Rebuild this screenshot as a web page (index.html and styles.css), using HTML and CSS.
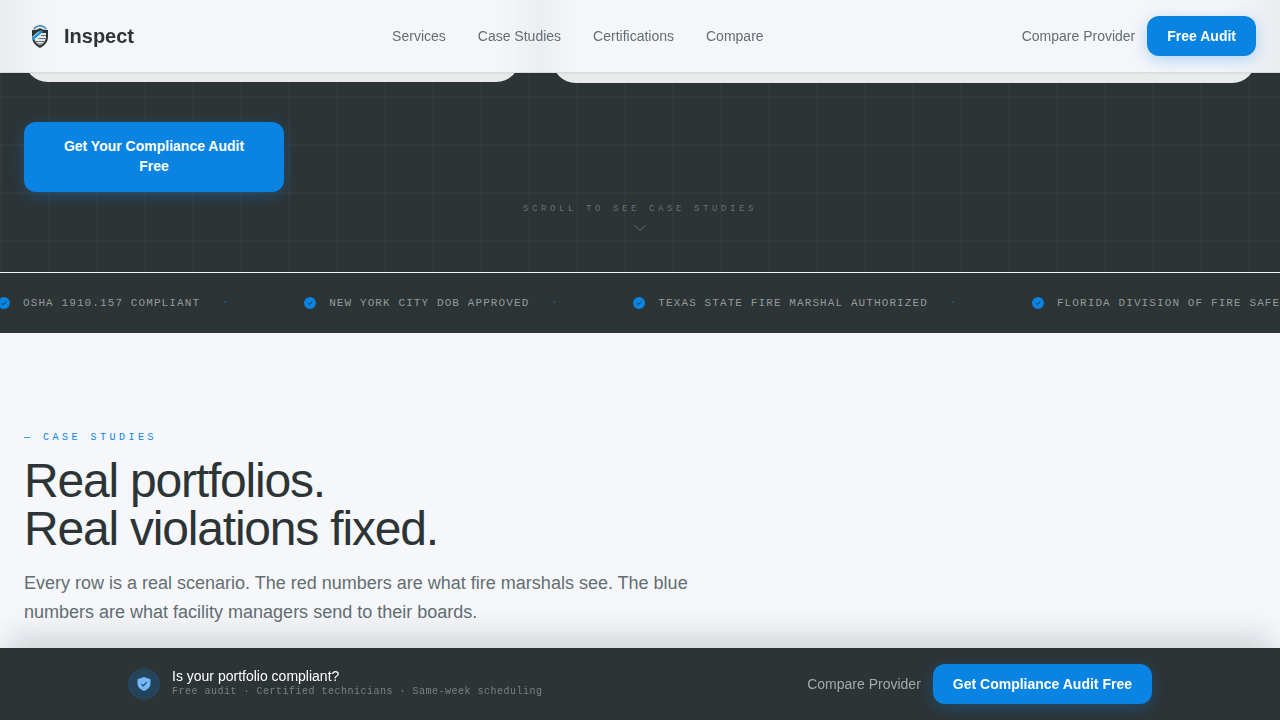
FILE: index.html
```html
<!DOCTYPE html>
<html lang="en">

<head>
    <meta charset="UTF-8">
    <meta name="viewport" content="width=device-width, initial-scale=1.0">
    <title>Inspect</title>
    <link rel="stylesheet" href="styles.css">
</head>

<body>

    <header class="header">
        <a href="#" class="logo">
            <svg class="logo-icon" viewBox="0 0 32 32" aria-hidden="true">
                <path d="M9.500 9Q16 2.500 22.500 9" fill="none" stroke="#6fb4d8" stroke-width="2" />
                <path d="M10.500 8Q16 3.500 21.500 8" fill="none" stroke="#2d5468" stroke-width="1" stroke-dasharray="1.500 1" />
                <path d="M8 10q5 .5 8-2q3 2.500 8 2v7q0 7-8 11q-8-4-8-11z" fill="#2d3436" />
                <path d="M10 18l5-5h7v4q0 5-6 8.500q-5-2.500-6-7.500z" fill="#e4e9ea" />
                <path d="M17 15.500h5M14.500 18.500h7M12 21.500h8M12.500 24h7" stroke="#626b6e" stroke-width="1" />
                <path d="M8.500 19.500v-3l6-5h4z" fill="#fff" />
                <path d="M8.500 19L18 11" stroke="#1c96dc" stroke-width="2.500" />
            </svg>
            <span>Inspect</span>
        </a>
        <nav class="nav">
            <a href="#">Services</a>
            <a href="#case-studies">Case Studies</a>
            <a href="#">Certifications</a>
            <a href="#">Compare</a>
        </nav>
        <div class="actions">
            <a href="#" class="compare">Compare Provider</a>
            <button type="button" class="btn">Free Audit</button>
        </div>
    </header>

    <section class="hero">
        <div class="cards">
            <div class="card"></div>
            <div class="card card-big"></div>
        </div>
        <button type="button" class="btn btn-hero">Get Your Compliance Audit Free</button>
        <div class="scroll">
            <span>SCROLL TO SEE CASE STUDIES</span>
            <svg width="16" height="16" viewBox="0 0 16 16" aria-hidden="true">
                <path d="M2.500 5L8 10.500L13.500 5" fill="none" stroke="currentColor" />
            </svg>
        </div>
    </section>

    <!-- trust strip -->
    <div class="strip">
        <ul class="track">
            <li>
                <svg class="check" viewBox="0 0 14 14" aria-hidden="true"><circle cx="7" cy="7" r="6" /><path d="M4.800 7.200l1.600 1.500 2.800-3.200" /></svg>
                <span>OSHA 1910.157 COMPLIANT</span>
                <i class="dot">·</i>
            </li>
            <li>
                <svg class="check" viewBox="0 0 14 14" aria-hidden="true"><circle cx="7" cy="7" r="6" /><path d="M4.800 7.200l1.600 1.500 2.800-3.200" /></svg>
                <span>NEW YORK CITY DOB APPROVED</span>
                <i class="dot">·</i>
            </li>
            <li>
                <svg class="check" viewBox="0 0 14 14" aria-hidden="true"><circle cx="7" cy="7" r="6" /><path d="M4.800 7.200l1.600 1.500 2.800-3.200" /></svg>
                <span>TEXAS STATE FIRE MARSHAL AUTHORIZED</span>
                <i class="dot">·</i>
            </li>
            <li>
                <svg class="check" viewBox="0 0 14 14" aria-hidden="true"><circle cx="7" cy="7" r="6" /><path d="M4.800 7.200l1.600 1.500 2.800-3.200" /></svg>
                <span>FLORIDA DIVISION OF FIRE SAFETY</span>
            </li>
        </ul>
    </div>

    <section class="studies" id="case-studies">
        <p class="label">— CASE STUDIES</p>
        <h2>Real portfolios.<br>Real violations fixed.</h2>
        <p class="lead">Every row is a real scenario. The red numbers are what fire marshals see. The blue numbers are what facility managers send to their boards.</p>
    </section>

    <div class="bottom-bar">
        <div class="bottom-inner">
            <div class="bottom-info">
                <div class="badge">
                    <svg width="16" height="16" viewBox="0 0 16 16" aria-hidden="true">
                        <path d="M8 1l6.500 2.300v4.200q0 5-6.500 7.500q-6.500-2.500-6.500-7.500v-4.200z" fill="#74b9ff" />
                        <path d="M5.500 8.200l1.800 1.700 3.400-3.700" fill="none" stroke="#24475f" stroke-width="1.200" />
                    </svg>
                </div>
                <div>
                    <p class="bottom-title">Is your portfolio compliant?</p>
                    <p class="bottom-sub">Free audit · Certified technicians · Same-week scheduling</p>
                </div>
            </div>
            <div class="actions">
                <a href="#" class="compare compare-light">Compare Provider</a>
                <button type="button" class="btn">Get Compliance Audit Free</button>
            </div>
        </div>
    </div>

</body>

</html>
```

FILE: styles.css
```css
* {
    margin: 0;
    padding: 0;
    box-sizing: border-box;
}

body {
    background: #f5f7fb;
    color: #2d3436;
    font-family: "Liberation Sans", Arial, sans-serif;
    font-size: 14px;
    line-height: 20px;
    min-height: 100vh;
    overflow-x: hidden;
}

a {
    color: inherit;
    text-decoration: none;
}

/* header */
.header {
    position: fixed;
    top: 0;
    left: 0;
    right: 0;
    z-index: 10;
    display: flex;
    justify-content: space-between;
    align-items: center;
    padding: 16px 24px;
    background: linear-gradient(90deg, #ebecf0, #f5f6fa 4%, #f5f6fa 39%, #edeef2 42%, #f5f6fa 45%, #f5f6fa 96%, #ebecf0);
    border-bottom: 1px solid #d9dcde;
    box-shadow: 0 1px 3px rgba(45, 52, 54, 0.05);
}

.logo {
    display: flex;
    align-items: center;
    gap: 8px;
    font-size: 20px;
    font-weight: bold;
}

.logo-icon {
    width: 32px;
    height: 32px;
}

.nav {
    display: flex;
    gap: 32px;
    color: #636e72;
}

.actions {
    display: flex;
    align-items: center;
    gap: 12px;
}

.compare {
    color: #636e72;
}

.compare-light {
    color: #a5a9aa;
}

.btn {
    padding: 10px 20px;
    border: none;
    border-radius: 12px;
    background: #0984e3;
    color: #fff;
    font: bold 14px/20px "Liberation Sans", Arial, sans-serif;
    box-shadow: 0 4px 16px rgba(9, 132, 227, 0.3);
    cursor: pointer;
}

/* hero */
.hero {
    padding: 0 24px 36px;
    background-color: #2d3436;
    background-image:
        linear-gradient(rgba(255, 255, 255, 0.024) 2px, transparent 2px),
        linear-gradient(90deg, rgba(255, 255, 255, 0.024) 2px, transparent 2px);
    background-size: 48px 48px;
}

.cards {
    display: grid;
    grid-template-columns: 496fr 704fr;
    align-items: start;
    gap: 32px;
    margin-bottom: 39px;
}

.card {
    height: 82px;
    border-radius: 0 0 24px 24px;
    background: #e9ebeb;
}

.card-big {
    height: 83px;
}

.btn-hero {
    display: block;
    width: 260px;
    padding: 14px 32px 16px;
}

.scroll {
    display: flex;
    flex-direction: column;
    align-items: center;
    gap: 4px;
    margin-top: 10px;
    color: #6a7072;
    font: 9px/14px "Liberation Mono", monospace;
    letter-spacing: 0.4em;
}

/* trust strip */
.strip {
    overflow: hidden;
    padding: 20px 0;
    border-top: 1px solid #f5f6fa;
    background: #2d3436;
}

.track {
    display: flex;
    width: max-content;
    margin-left: -3px;
    list-style: none;
    color: #949a9c;
    font: 11px/20px "Liberation Mono", monospace;
    letter-spacing: 0.1em;
}

.track li {
    display: flex;
    align-items: center;
    padding-right: 76px;
}

.check {
    width: 14px;
    height: 14px;
    margin-right: 12px;
    fill: #0984e3;
}

.check path {
    fill: none;
    stroke: #2d3436;
}

.dot {
    width: 5px;
    margin-left: 22px;
    color: #0984e3;
    font-size: 10px;
    font-style: normal;
    opacity: 0.6;
}

/* case studies */
.studies {
    padding: 96px 24px 80px;
}

.label {
    margin-bottom: 10px;
    color: #0984e3;
    font: 10px/18px "Liberation Mono", monospace;
    letter-spacing: 0.35em;
}

.studies h2 {
    margin-bottom: 16px;
    font-size: 48px;
    font-weight: normal;
    line-height: 48px;
    letter-spacing: -0.025em;
}

.lead {
    max-width: 672px;
    color: #636e72;
    font-size: 18px;
    line-height: 29px;
}

/* bottom bar */
.bottom-bar {
    position: fixed;
    left: 0;
    right: 0;
    bottom: 0;
    z-index: 10;
    padding: 16px 24px;
    background: #2d3436;
    box-shadow: 0 -20px 30px -8px rgba(45, 52, 54, 0.18);
}

.bottom-inner {
    display: flex;
    justify-content: space-between;
    align-items: center;
    max-width: 1024px;
    margin: 0 auto;
}

.bottom-info {
    display: flex;
    align-items: center;
    gap: 12px;
}

.badge {
    display: flex;
    justify-content: center;
    align-items: center;
    width: 32px;
    height: 32px;
    border-radius: 50%;
    background: #24445b;
}

.bottom-title {
    color: #fff;
    line-height: 16px;
}

.bottom-sub {
    color: #7b8082;
    font: 10px/16px "Liberation Mono", monospace;
    letter-spacing: 0.05em;
}
```
